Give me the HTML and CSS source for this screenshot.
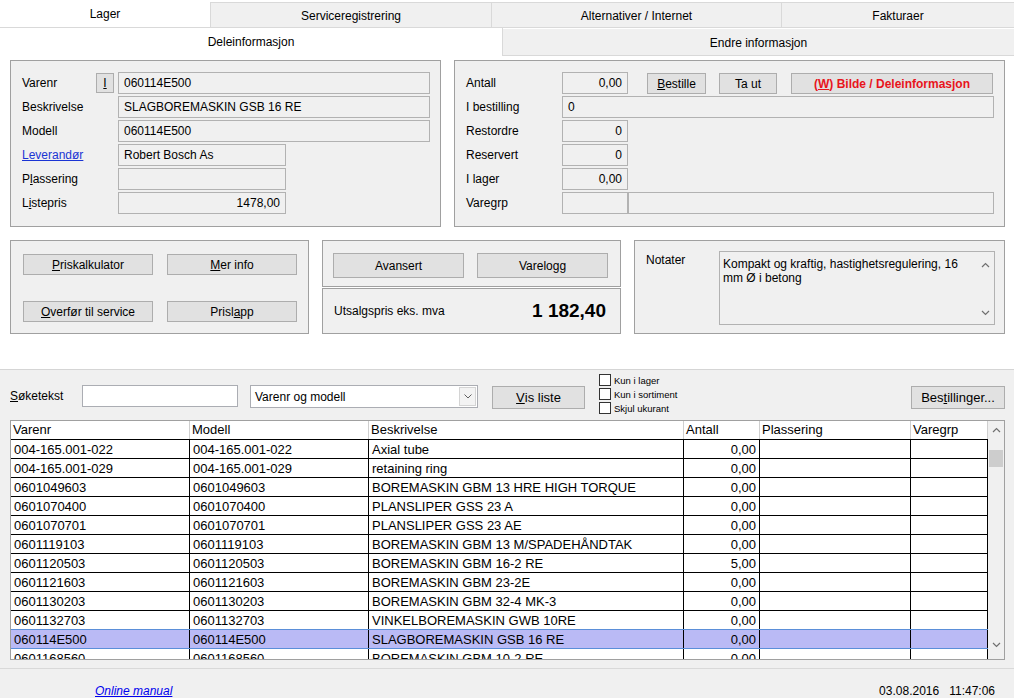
FILE: index.html
```html
<!DOCTYPE html>
<html lang="no">
<head>
<meta charset="utf-8">
<title>Lager</title>
<link rel="stylesheet" href="styles.css">
</head>
<body>
<div class="app">
  <div class="tabs1">
    <div class="tab1 active t-lager">Lager</div>
    <div class="tab1 t-service">Serviceregistrering</div>
    <div class="tab1 t-alt">Alternativer / Internet</div>
    <div class="tab1 t-fakt">Fakturaer</div>
  </div>
  <div class="tabs2">
    <div class="tab2 active">Deleinformasjon</div>
    <div class="tab2 t-endre">Endre informasjon</div>
  </div>

  <div class="top">
    <div class="row1">
      <div class="panel p-info">
        <div class="frow">
          <div class="lbl lbl-varenr">Varenr<button class="btn btn-i"><u>I</u></button></div>
          <div class="fld w-long">060114E500</div>
        </div>
        <div class="frow"><div class="lbl">Beskrivelse</div><div class="fld w-long">SLAGBOREMASKIN GSB 16 RE</div></div>
        <div class="frow"><div class="lbl">Modell</div><div class="fld w-long">060114E500</div></div>
        <div class="frow"><div class="lbl"><span class="link">Leverandør</span></div><div class="fld w-mid">Robert Bosch As</div></div>
        <div class="frow"><div class="lbl">P<u>l</u>assering</div><div class="fld w-mid"></div></div>
        <div class="frow"><div class="lbl">L<u>i</u>stepris</div><div class="fld w-mid num">1478,00</div></div>
      </div>
      <div class="panel p-stock">
        <div class="frow">
          <div class="lbl">Antall</div><div class="fld w-num num">0,00</div>
          <button class="btn b-best"><u>B</u>estille</button>
          <button class="btn b-taut">Ta ut</button>
          <button class="btn b-bilde">(<u>W</u>) Bilde / Deleinformasjon</button>
        </div>
        <div class="frow"><div class="lbl">I bestilling</div><div class="fld w-full">0</div></div>
        <div class="frow"><div class="lbl">Restordre</div><div class="fld w-num num">0</div></div>
        <div class="frow"><div class="lbl">Reservert</div><div class="fld w-num num">0</div></div>
        <div class="frow"><div class="lbl">I lager</div><div class="fld w-num num">0,00</div></div>
        <div class="frow"><div class="lbl">Varegrp</div><div class="fld w-grp1"></div><div class="fld w-grp2"></div></div>
      </div>
    </div>

    <div class="row2">
      <div class="panel p-tools">
        <button class="btn"><u>P</u>riskalkulator</button>
        <button class="btn"><u>M</u>er info</button>
        <button class="btn"><u>O</u>verfør til service</button>
        <button class="btn">Prisl<u>a</u>pp</button>
      </div>
      <div class="col-mid">
        <div class="panel p-adv">
          <button class="btn">Avansert</button>
          <button class="btn">Varelogg</button>
        </div>
        <div class="panel p-price">
          <span>Utsalgspris eks. mva</span>
          <span class="price">1 182,40</span>
        </div>
      </div>
      <div class="panel p-notes">
        <div class="notes-lbl">Notater</div>
        <div class="memo">
          <div class="memo-text">Kompakt og kraftig, hastighetsregulering, 16<br>mm Ø i betong</div>
          <div class="memo-sb">
            <svg width="9" height="6" viewBox="0 0 9 6"><polyline points="1,5 4.5,1.5 8,5" fill="none" stroke="#707070" stroke-width="1.2"/></svg>
            <svg width="9" height="6" viewBox="0 0 9 6"><polyline points="1,1 4.5,4.5 8,1" fill="none" stroke="#707070" stroke-width="1.2"/></svg>
          </div>
        </div>
      </div>
    </div>
  </div>

  <div class="lower">
    <div class="search">
      <div class="s-lbl"><u>S</u>øketekst</div>
      <div class="s-inp"></div>
      <div class="s-sel">
        <span>Varenr og modell</span>
        <span class="s-drop"><svg width="8" height="5" viewBox="0 0 8 5"><polyline points="0.5,0.5 4,4 7.5,0.5" fill="none" stroke="#606060" stroke-width="1"/></svg></span>
      </div>
      <button class="btn b-vis"><u>V</u>is liste</button>
      <div class="checks">
        <div class="chk"><span class="box"></span>Kun i lager</div>
        <div class="chk"><span class="box"></span>Kun i sortiment</div>
        <div class="chk"><span class="box"></span>Skjul ukurant</div>
      </div>
      <button class="btn b-bestil">Bes<u>t</u>illinger...</button>
    </div>

    <div class="tbl">
      <div class="grid">
        <div class="tr th-row">
          <div class="th">Varenr</div><div class="th">Modell</div><div class="th">Beskrivelse</div><div class="th">Antall</div><div class="th">Plassering</div><div class="th">Varegrp</div>
        </div>
        <div class="tr"><div class="td">004-165.001-022</div><div class="td">004-165.001-022</div><div class="td">Axial tube</div><div class="td r">0,00</div><div class="td"></div><div class="td"></div></div>
        <div class="tr"><div class="td">004-165.001-029</div><div class="td">004-165.001-029</div><div class="td">retaining ring</div><div class="td r">0,00</div><div class="td"></div><div class="td"></div></div>
        <div class="tr"><div class="td">0601049603</div><div class="td">0601049603</div><div class="td">BOREMASKIN GBM 13 HRE HIGH TORQUE</div><div class="td r">0,00</div><div class="td"></div><div class="td"></div></div>
        <div class="tr"><div class="td">0601070400</div><div class="td">0601070400</div><div class="td">PLANSLIPER GSS 23 A</div><div class="td r">0,00</div><div class="td"></div><div class="td"></div></div>
        <div class="tr"><div class="td">0601070701</div><div class="td">0601070701</div><div class="td">PLANSLIPER GSS 23 AE</div><div class="td r">0,00</div><div class="td"></div><div class="td"></div></div>
        <div class="tr"><div class="td">0601119103</div><div class="td">0601119103</div><div class="td">BOREMASKIN GBM 13 M/SPADEHÅNDTAK</div><div class="td r">0,00</div><div class="td"></div><div class="td"></div></div>
        <div class="tr"><div class="td">0601120503</div><div class="td">0601120503</div><div class="td">BOREMASKIN GBM 16-2 RE</div><div class="td r">5,00</div><div class="td"></div><div class="td"></div></div>
        <div class="tr"><div class="td">0601121603</div><div class="td">0601121603</div><div class="td">BOREMASKIN GBM 23-2E</div><div class="td r">0,00</div><div class="td"></div><div class="td"></div></div>
        <div class="tr"><div class="td">0601130203</div><div class="td">0601130203</div><div class="td">BOREMASKIN GBM 32-4 MK-3</div><div class="td r">0,00</div><div class="td"></div><div class="td"></div></div>
        <div class="tr presel"><div class="td">0601132703</div><div class="td">0601132703</div><div class="td">VINKELBOREMASKIN GWB 10RE</div><div class="td r">0,00</div><div class="td"></div><div class="td"></div></div>
        <div class="tr sel"><div class="td">060114E500</div><div class="td">060114E500</div><div class="td">SLAGBOREMASKIN GSB 16 RE</div><div class="td r">0,00</div><div class="td"></div><div class="td"></div></div>
        <div class="tr"><div class="td">0601168560</div><div class="td">0601168560</div><div class="td">BOREMASKIN GBM 10-2 RE</div><div class="td r">0,00</div><div class="td"></div><div class="td"></div></div>
      </div>
      <div class="sb">
        <div class="sb-btn"><svg width="9" height="6" viewBox="0 0 9 6"><polyline points="1,5 4.5,1.5 8,5" fill="none" stroke="#707070" stroke-width="1.2"/></svg></div>
        <div class="sb-thumb"></div>
        <div class="sb-btn sb-down"><svg width="9" height="6" viewBox="0 0 9 6"><polyline points="1,1 4.5,4.5 8,1" fill="none" stroke="#707070" stroke-width="1.2"/></svg></div>
      </div>
    </div>
  </div>

  <div class="status">
    <span class="manual">Online manual</span>
    <span class="datetime">03.08.2016   11:47:06</span>
  </div>
</div>
</body>
</html>
```

FILE: styles.css
```css
* { box-sizing: border-box; }
html, body { margin: 0; padding: 0; }
body {
  font-family: "Liberation Sans", Arial, sans-serif;
  font-size: 12px;
  color: #000;
  background: #fff;
}
u { text-decoration: underline; text-underline-offset: 1px; }

.app {
  width: 1014px;
  height: 698px;
  overflow: hidden;
  display: flex;
  flex-direction: column;
}

/* ---------- tabs ---------- */
.tabs1 {
  display: flex;
  height: 28px;
  flex: none;
  border-bottom: 1px solid #d9d9d9;
}
.tab1 {
  display: flex;
  justify-content: center;
  align-items: center;
  background: #f0f0f0;
  margin-top: 2px;
  border-top: 1px solid #d9d9d9;
  border-left: 1px solid #d9d9d9;
  padding-top: 2px;
}
.tab1.active {
  background: #fff;
  margin-top: 0;
  border: none;
  padding-top: 1px;
}
.t-lager { width: 210px; }
.t-service { width: 281px; }
.t-alt { width: 290px; }
.t-fakt { flex: 1; }

.tabs2 {
  display: flex;
  height: 28px;
  flex: none;
}
.tab2 {
  display: flex;
  justify-content: center;
  align-items: center;
}
.tab2.active {
  width: 503px;
  background: #fff;
  border-right: 1px solid #d9d9d9;
}
.t-endre {
  flex: 1;
  background: #f0f0f0;
  margin-top: 1px;
  border-bottom: 1px solid #d9d9d9;
  padding-top: 2px;
}

/* ---------- upper area ---------- */
.top {
  height: 313px;
  flex: none;
  padding: 4px 9px 0 10px;
  background: #fff;
}
.row1 {
  display: flex;
  gap: 13px;
  height: 167px;
}
.panel {
  border: 1px solid #a0a0a0;
  background: #f0f0f0;
}
.p-info {
  width: 431px;
  padding: 11px 0 0 11px;
  display: flex;
  flex-direction: column;
  gap: 2px;
}
.p-stock {
  width: 551px;
  padding: 11px 0 0 11px;
  display: flex;
  flex-direction: column;
  gap: 2px;
}
.frow {
  display: flex;
  height: 22px;
  align-items: flex-start;
}
.lbl {
  width: 96px;
  flex: none;
  height: 22px;
  display: flex;
  align-items: center;
  white-space: nowrap;
}
.lbl-varenr {
  justify-content: space-between;
  padding-right: 4px;
}
.link {
  color: #1a34d4;
  text-decoration: underline;
}
.fld {
  flex: none;
  height: 22px;
  border: 1px solid #b2b2b2;
  background: #f0f0f0;
  padding: 0 5px;
  display: flex;
  align-items: center;
  white-space: nowrap;
  overflow: hidden;
}
.num { justify-content: flex-end; }
.w-long { width: 312px; }
.w-mid { width: 168px; }
.w-num { width: 66px; }
.w-full { width: 432px; }
.w-grp1 { width: 66px; }
.w-grp2 { width: 366px; }

.btn {
  font: inherit;
  color: #000;
  background: #e1e1e1;
  border: 1px solid #adadad;
  padding: 0;
  margin: 0;
  display: flex;
  align-items: center;
  justify-content: center;
  white-space: nowrap;
}
.btn-i { width: 18px; height: 20px; }
.b-best { width: 59px; height: 21px; margin: 1px 0 0 19px; }
.b-taut { width: 58px; height: 21px; margin: 1px 0 0 13px; }
.b-bilde {
  width: 202px;
  height: 21px;
  margin: 1px 0 0 14px;
  color: #e8141c;
  font-weight: bold;
}

.row2 {
  display: flex;
  gap: 13px;
  height: 94px;
  margin-top: 13px;
}
.p-tools {
  width: 299px;
  padding: 13px 0 0 12px;
  display: grid;
  grid-template-columns: 130px 130px;
  grid-auto-rows: 21px;
  column-gap: 14px;
  row-gap: 26px;
  align-content: start;
}
.col-mid {
  width: 299px;
  display: flex;
  flex-direction: column;
  gap: 1px;
}
.p-adv {
  height: 47px;
  padding: 12px 0 0 10px;
  display: flex;
  gap: 13px;
}
.p-adv .btn { width: 131px; height: 25px; }
.p-price {
  height: 46px;
  display: flex;
  align-items: center;
  justify-content: space-between;
  padding: 0 14px 0 11px;
}
.price {
  font-size: 19px;
  font-weight: bold;
}
.p-notes {
  width: 371px;
  display: flex;
  padding: 10px 0 0 11px;
}
.notes-lbl {
  width: 73px;
  flex: none;
  margin-top: 2px;
  line-height: 14px;
}
.memo {
  width: 276px;
  height: 74px;
  border: 1px solid #b2b2b2;
  display: flex;
}
.memo-text {
  flex: 1;
  padding: 5px 0 0 3px;
  line-height: 14px;
}
.memo-sb {
  width: 17px;
  flex: none;
  display: flex;
  flex-direction: column;
  justify-content: space-between;
  align-items: center;
  padding: 10px 0 8px;
}
.memo-sb svg { display: block; }

/* ---------- lower area ---------- */
.lower {
  height: 299px;
  flex: none;
  border-top: 1px solid #d5d5d5;
  background: #f0f0f0;
  padding: 3px 9px 0 10px;
}
.search {
  display: flex;
  height: 47px;
  align-items: flex-start;
}
.s-lbl {
  width: 72px;
  flex: none;
  margin-top: 12px;
  line-height: 22px;
}
.s-inp {
  width: 156px;
  height: 22px;
  margin-top: 12px;
  background: #fff;
  border: 1px solid #abadb3;
}
.s-sel {
  width: 228px;
  height: 23px;
  margin: 12px 0 0 12px;
  background: #fff;
  border: 1px solid #abadb3;
  display: flex;
  align-items: center;
  justify-content: space-between;
  padding: 0 1px 0 4px;
}
.s-drop {
  width: 17px;
  height: 19px;
  border: 1px solid #d4d4d4;
  background: #f3f3f3;
  display: flex;
  align-items: center;
  justify-content: center;
}
.s-drop svg { display: block; }
.b-vis {
  width: 93px;
  height: 23px;
  margin: 13px 0 0 14px;
  font-size: 13px;
}
.checks {
  margin-left: 14px;
  display: flex;
  flex-direction: column;
}
.chk {
  height: 14px;
  display: flex;
  align-items: center;
  font-size: 9.5px;
  white-space: nowrap;
}
.box {
  width: 12px;
  height: 12px;
  border: 1px solid #333;
  background: #fff;
  margin-right: 3px;
}
.b-bestil {
  margin: 13px 0 0 auto;
  width: 94px;
  height: 23px;
  font-size: 13px;
}

.tbl {
  height: 240px;
  border: 1px solid #a0a0a0;
  background: #fff;
  display: flex;
  overflow: hidden;
}
.grid {
  width: 977px;
  flex: none;
}
.tr {
  display: grid;
  grid-template-columns: 179px 179px 315px 76px 151px 77px;
  height: 19px;
  border-bottom: 1px solid #000;
  font-size: 13px;
}
.th {
  border-right: 1px solid #cfcfcf;
  padding: 0 2px;
  line-height: 18px;
  white-space: nowrap;
}
.td {
  border-right: 1px solid #000;
  padding: 1px 3px 0;
  line-height: 18px;
  white-space: nowrap;
  overflow: hidden;
}
.r { text-align: right; }
.sel {
  background: #babaf5;
  border-bottom-color: #5b8fd9;
}
.presel { border-bottom-color: #5b8fd9; }

.sb {
  flex: 1;
  background: #f0f0f0;
  display: flex;
  flex-direction: column;
  align-items: center;
}
.sb-btn {
  height: 17px;
  width: 100%;
  display: flex;
  align-items: center;
  justify-content: center;
}
.sb-btn svg { display: block; }
.sb-thumb {
  width: 14px;
  height: 17px;
  margin-top: 12px;
  background: #cdcdcd;
}
.sb-down {
  margin-top: auto;
  align-items: flex-start;
  padding-top: 3px;
  height: 20px;
}

/* ---------- status ---------- */
.status {
  height: 30px;
  flex: none;
  border-top: 1px solid #d9d9d9;
  background: #f0f0f0;
  display: flex;
  justify-content: space-between;
  padding: 15px 19px 0 95px;
  line-height: 14px;
}
.manual {
  color: #0000ee;
  font-style: italic;
  text-decoration: underline;
}
.datetime { white-space: pre; }
```
